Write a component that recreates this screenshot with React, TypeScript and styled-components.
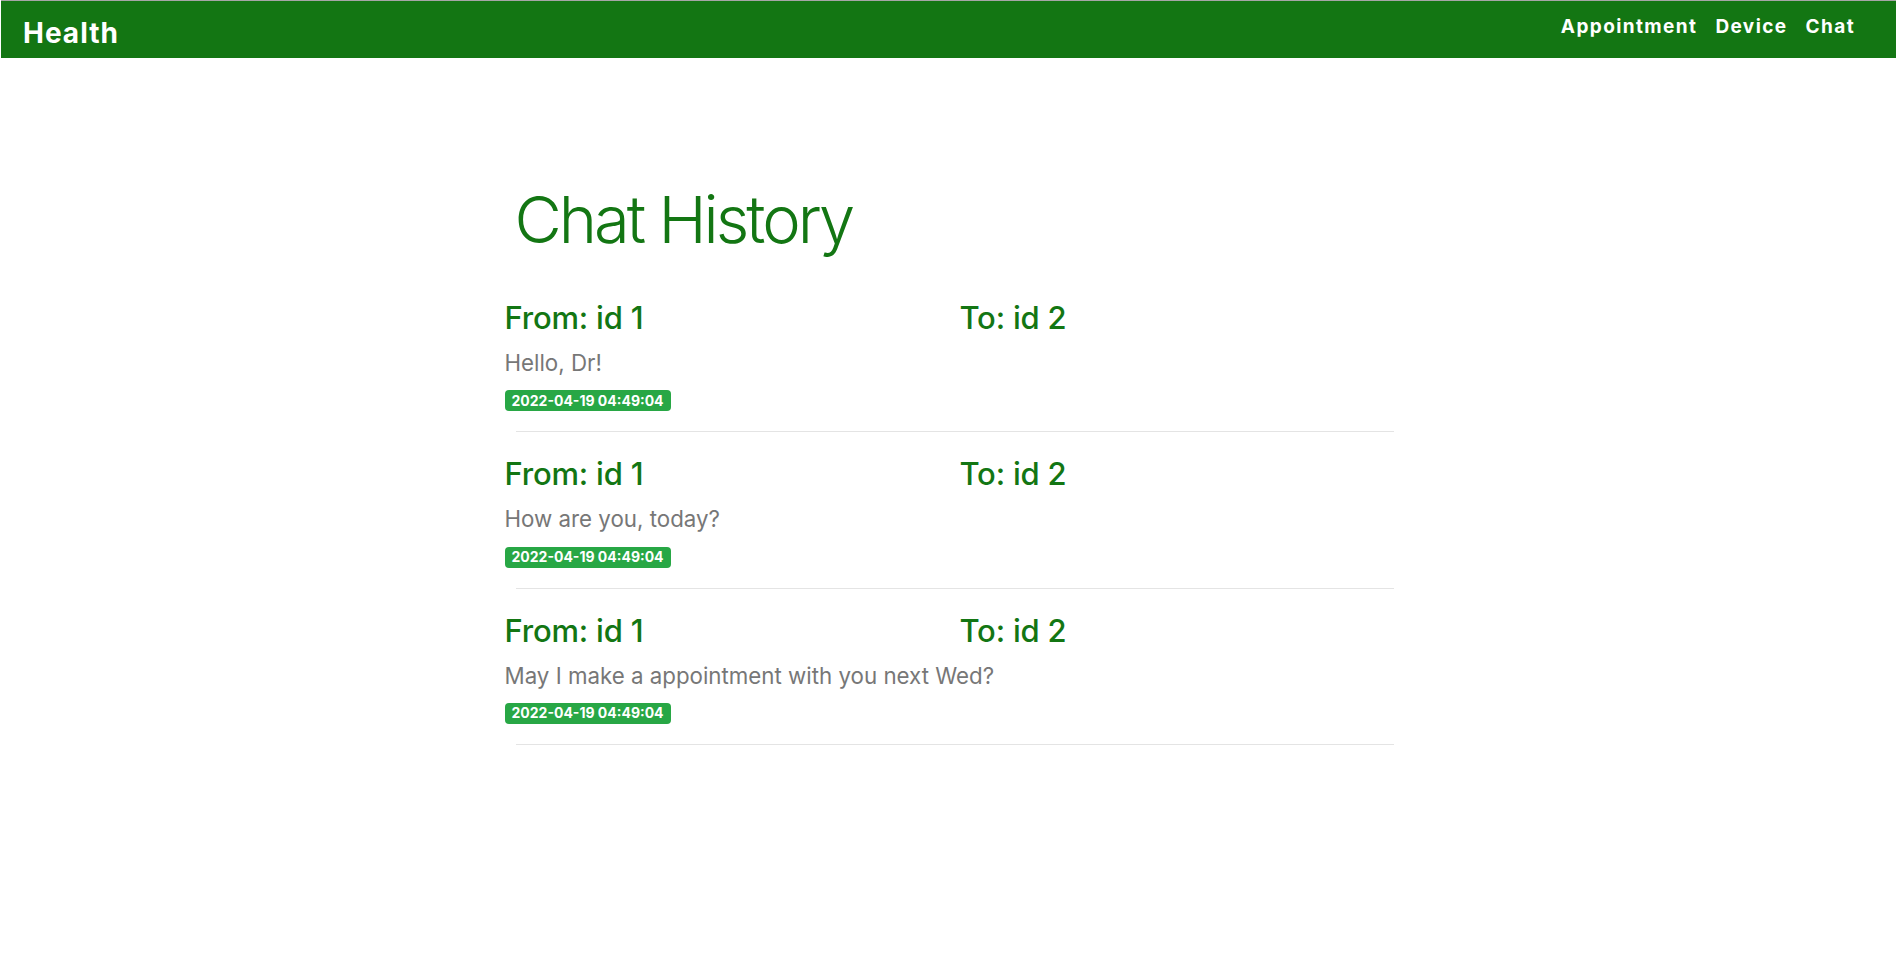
import React from "react";
import styled, { createGlobalStyle } from "styled-components";

const GlobalStyle = createGlobalStyle`
  html, body {
    margin: 0;
    padding: 0;
    background: #ffffff;
  }
  body {
    font-family: Inter, "Noto Sans", "Liberation Sans", sans-serif;
    -webkit-font-smoothing: antialiased;
  }
  * { box-sizing: border-box; }
`;

const Page = styled.div`
  min-height: 978px;
  background: #ffffff;
`;

const Nav = styled.nav`
  display: flex;
  align-items: center;
  justify-content: space-between;
  height: 58px;
  margin: 0 1px;
  border-top: 1px solid #a6a6a6;
  background: #137613;
  padding: 0 41px 0 22px;
`;

const Brand = styled.a`
  color: #ffffff;
  font-size: 28px;
  font-weight: 700;
  letter-spacing: 1px;
  line-height: 1;
  text-decoration: none;
  margin-top: 6px;
`;

const NavLinks = styled.div`
  display: flex;
  gap: 18px;
  margin-top: -6px;
`;

const NavLink = styled.a`
  color: #ffffff;
  font-size: 19px;
  font-weight: 700;
  letter-spacing: 1.4px;
  line-height: 1;
  text-decoration: none;
`;

const Container = styled.main`
  width: 900px;
  margin-left: calc(50% - 444px);
  padding-top: 129px;
  padding-bottom: 40px;
`;

const Title = styled.h1`
  margin: 0 0 50px 10px;
  font-size: 65px;
  font-weight: 300;
  line-height: 1;
  letter-spacing: -3px;
  color: #137613;
`;

const Entry = styled.section`
  display: flex;
  flex-direction: column;
  padding-top: 26px;
  &:first-of-type {
    padding-top: 0;
  }
`;

const Head = styled.div`
  display: grid;
  grid-template-columns: 455px 1fr;
`;

const Party = styled.h3`
  margin: 0;
  font-size: 31px;
  font-weight: 500;
  line-height: 1;
  color: #137613;
  letter-spacing: -0.2px;
`;

const Message = styled.p`
  margin: 19px 0 0;
  font-size: 22.3px;
  font-weight: 400;
  line-height: 1;
  color: #777777;
`;

const Badge = styled.span`
  align-self: flex-start;
  display: inline-flex;
  align-items: center;
  height: 21px;
  margin-top: 16px;
  padding: 0 7px;
  border-radius: 4px;
  background: #28a745;
  color: #ffffff;
  font-size: 14px;
  font-weight: 700;
  line-height: 1;
`;

const Divider = styled.hr`
  margin: 20px 11px 0;
  width: 878px;
  border: 0;
  border-top: 1px solid #e4e4e4;
  height: 0;
`;

const chats = [
  { from: "id 1", to: "id 2", text: "Hello, Dr!", time: "2022-04-19 04:49:04" },
  { from: "id 1", to: "id 2", text: "How are you, today?", time: "2022-04-19 04:49:04" },
  {
    from: "id 1",
    to: "id 2",
    text: "May I make a appointment with you next Wed?",
    time: "2022-04-19 04:49:04",
  },
];

export default function App() {
  return (
    <Page>
      <GlobalStyle />
      <Nav>
        <Brand href="#">Health</Brand>
        <NavLinks>
          <NavLink href="#">Appointment</NavLink>
          <NavLink href="#">Device</NavLink>
          <NavLink href="#">Chat</NavLink>
        </NavLinks>
      </Nav>
      <Container>
        <Title>Chat History</Title>
        {chats.map((c, i) => (
          <Entry key={i}>
            <Head>
              <Party>From: {c.from}</Party>
              <Party>To: {c.to}</Party>
            </Head>
            <Message>{c.text}</Message>
            <Badge>{c.time}</Badge>
            <Divider />
          </Entry>
        ))}
      </Container>
    </Page>
  );
}
